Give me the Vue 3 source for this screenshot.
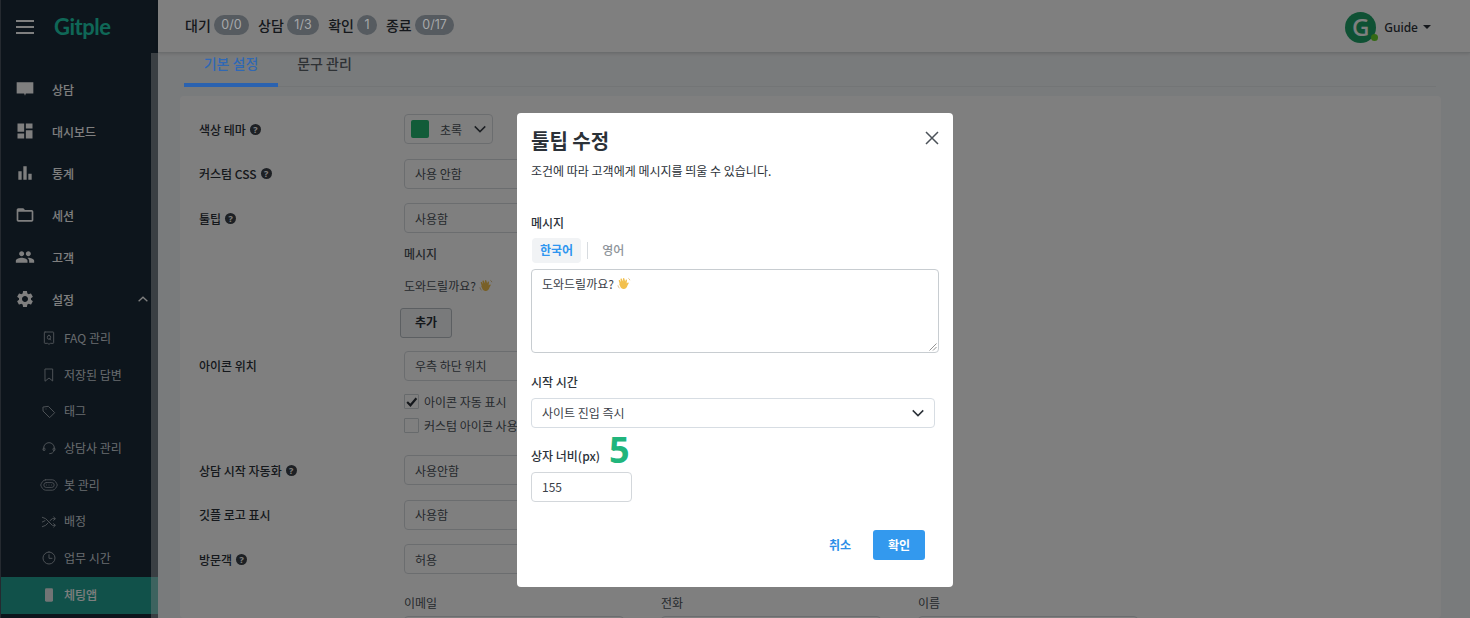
<script setup>
const mainNav = [
  { label: '상담', d: 'M2 4h20v13.5h-9L12 20l-1-2.5H2z' },
  { label: '대시보드', d: 'M3 13h8V3H3v10zm0 8h8v-6H3v6zm10 0h8V11h-8v10zm0-18v6h8V3h-8z' },
  { label: '통계', d: 'M4 10h4v10H4zM10 4h4v16h-4zM16 13h4v7h-4z' },
  { label: '세션', d: 'M20 6h-8l-2-2H4c-1.1 0-1.99.9-1.99 2L2 18c0 1.1.9 2 2 2h16c1.1 0 2-.9 2-2V8c0-1.1-.9-2-2-2zm0 12H4V8h16v10z' },
  { label: '고객', d: 'M16 11c1.66 0 2.99-1.34 2.99-3S17.66 5 16 5c-1.66 0-3 1.34-3 3s1.34 3 3 3zm-8 0c1.66 0 2.99-1.34 2.99-3S9.66 5 8 5C6.34 5 5 6.34 5 8s1.34 3 3 3zm0 2c-2.33 0-7 1.17-7 3.5V19h14v-2.5c0-2.33-4.67-3.5-7-3.5zm8 0c-.29 0-.62.02-.97.05 1.16.84 1.97 1.97 1.97 3.45V19h6v-2.5c0-2.33-4.67-3.5-7-3.5z' },
  { label: '설정', open: true, d: 'M19.14 12.94c.04-.3.06-.61.06-.94 0-.32-.02-.64-.07-.94l2.03-1.58c.18-.14.23-.41.12-.61l-1.92-3.32c-.12-.22-.37-.29-.59-.22l-2.39.96c-.5-.38-1.03-.7-1.62-.94l-.36-2.54c-.04-.24-.24-.41-.48-.41h-3.84c-.24 0-.43.17-.47.41l-.36 2.54c-.59.24-1.13.57-1.62.94l-2.39-.96c-.22-.08-.47 0-.59.22L2.74 8.87c-.12.21-.08.47.12.61l2.03 1.58c-.05.3-.09.63-.09.94s.02.64.07.94l-2.03 1.58c-.18.14-.23.41-.12.61l1.92 3.32c.12.22.37.29.59.22l2.39-.96c.5.38 1.03.7 1.62.94l.36 2.54c.05.24.24.41.48.41h3.84c.24 0 .44-.17.47-.41l.36-2.54c.59-.24 1.13-.56 1.62-.94l2.39.96c.22.08.47 0 .59-.22l1.92-3.32c.12-.22.07-.47-.12-.61l-2.01-1.58zM12 15.6c-1.98 0-3.6-1.62-3.6-3.6s1.62-3.6 3.6-3.6 3.6 1.62 3.6 3.6-1.62 3.6-3.6 3.6z' }
]

const subNav = [
  { label: 'FAQ 관리', d: 'M6 3h12a1 1 0 0 1 1 1v15a1 1 0 0 1-1 1h-4l-2 1.5L10 20H6a1 1 0 0 1-1-1V4a1 1 0 0 1 1-1zM12 8a2.5 3 0 1 0 0 6 2.500 3 0 0 0 0-6zM13 13l1.500 2' },
  { label: '저장된 답변', d: 'M6.500 3h11v18L12 16.500 6.500 21z' },
  { label: '태그', d: 'M3.500 4.500 11 3.500l9.500 9.500-7.500 7.500L3.500 11zM7.500 7.500h.01' },
  { label: '상담사 관리', d: 'M4 14v-2a8 8 0 0 1 16 0v2M3 14.500a1.500 1.500 0 0 0 3 0v-1a1.500 1.500 0 0 0-3 0zM18 14.500a1.500 1.500 0 0 0 3 0v-1a1.500 1.500 0 0 0-3 0zM19.500 16c-.5 3-3.500 4.500-6.500 4.500' },
  { label: '봇 관리', wide: true, d: 'M7 4.500h10c3.500 0 6 4.500 7 7.500-1 3-3.500 7.500-7 7.500H7c-3.500 0-6-4.500-7-7.500 1-3 3.500-7.500 7-7.500zM8 8.500h8a3.500 3.500 0 0 1 0 7H8a3.500 3.500 0 0 1 0-7zM8.500 12h.01M12 12h.01M15.500 12h.01' },
  { label: '배정', d: 'M2 5l5 2 10 10h4M2 12l4-2M2 19l5-2 3.500-3.500M13.500 10 17 7h4M19 4.500 21.500 7 19 9.500M19 14.500l2.500 2.500-2.500 2.500' },
  { label: '업무 시간', d: 'M12 3a9 9 0 1 0 0 18 9 9 0 0 0 0-18zM12 7v5.500h4.500' },
  { label: '체팅앱', active: true, solid: true, d: 'M8 2h8a2 2 0 0 1 2 2v16a2 2 0 0 1-2 2H8a2 2 0 0 1-2-2V4a2 2 0 0 1 2-2z' }
]

const counters = [
  { label: '대기', value: '0/0' },
  { label: '상담', value: '1/3' },
  { label: '확인', value: '1' },
  { label: '종료', value: '0/17' }
]

const chevron = 'M2 5l6 6 6-6'
</script>

<template>
  <div class="app">
    <aside class="sidebar">
      <div class="brand">
        <svg class="menu-icon" viewBox="0 0 18 14"><path d="M0 0h18v2H0zM0 6h18v2H0zM0 12h18v2H0z" /></svg>
        <span class="logo">Gitple</span>
      </div>
      <div class="nav-wrap">
        <nav class="nav">
          <a v-for="item in mainNav" :key="item.label" class="nav-item">
            <svg class="nav-icon" viewBox="0 0 24 24"><path :d="item.d" /></svg>
            <span>{{ item.label }}</span>
            <svg v-if="item.open" class="nav-caret" viewBox="0 0 16 16"><path d="M3 10.500 8 6l5 4.500" /></svg>
          </a>
          <a
            v-for="item in subNav"
            :key="item.label"
            class="sub-item"
            :class="{ active: item.active }"
          >
            <span class="sub-icon-box">
              <svg
                class="sub-icon"
                :class="{ solid: item.solid, wide: item.wide }"
                :viewBox="item.wide ? '-1 0 26 24' : '0 0 24 24'"
              ><path :d="item.d" /></svg>
            </span>
            <span>{{ item.label }}</span>
          </a>
        </nav>
        <div class="scrollbar"></div>
      </div>
    </aside>

    <div class="content">
      <header class="topbar">
        <div class="counters">
          <div v-for="c in counters" :key="c.label" class="counter">
            <span>{{ c.label }}</span>
            <span class="badge">{{ c.value }}</span>
          </div>
        </div>
        <div class="user">
          <div class="avatar">
            <span>G</span>
            <i class="avatar-dot"></i>
          </div>
          <span class="user-name">Guide</span>
          <i class="user-caret"></i>
        </div>
      </header>

      <div class="tabs">
        <a class="tab active">기본 설정</a>
        <a class="tab">문구 관리</a>
      </div>

      <section class="card">
        <div class="row">
          <label class="row-label">색상 테마 <i class="help">?</i></label>
          <div class="theme-select">
            <i class="swatch"></i>
            <span class="theme-name">초록</span>
            <svg class="chev" viewBox="0 0 16 16"><path :d="chevron" /></svg>
          </div>
        </div>
        <div class="row">
          <label class="row-label">커스텀 CSS <i class="help">?</i></label>
          <div class="control">사용 안함</div>
        </div>
        <div class="row">
          <label class="row-label">툴팁 <i class="help">?</i></label>
          <div class="control">사용함</div>
        </div>
        <div class="tooltip-list">
          <div class="small-head">메시지</div>
          <div class="tooltip-text">도와드릴까요? <svg class="wave" viewBox="0 0 16 16"><use href="#wave-hand" /></svg></div>
          <button class="add-btn" type="button">추가</button>
        </div>
        <div class="row">
          <label class="row-label">아이콘 위치</label>
          <div class="control">우측 하단 위치</div>
        </div>
        <div class="checks">
          <label class="check"><i class="box"><svg viewBox="0 0 12 12"><path d="M2 6.500 5 9.500 10.500 3" /></svg></i>아이콘 자동 표시</label>
          <label class="check"><i class="box"></i>커스텀 아이콘 사용</label>
        </div>
        <div class="row">
          <label class="row-label">상담 시작 자동화 <i class="help">?</i></label>
          <div class="control">사용안함</div>
        </div>
        <div class="row">
          <label class="row-label">깃플 로고 표시</label>
          <div class="control">사용함</div>
        </div>
        <div class="row">
          <label class="row-label">방문객 <i class="help">?</i></label>
          <div class="control">허용</div>
        </div>
        <div class="fields">
          <div class="field">이메일<div class="field-input"></div></div>
          <div class="field">전화<div class="field-input"></div></div>
          <div class="field">이름<div class="field-input"></div></div>
        </div>
      </section>
    </div>

    <div class="overlay">
      <div class="modal">
        <div class="modal-head">
          <h2>툴팁 수정</h2>
          <svg class="close" viewBox="0 0 14 14"><path d="M1 1l12 12M13 1 1 13" /></svg>
        </div>
        <p class="modal-desc">조건에 따라 고객에게 메시지를 띄울 수 있습니다.</p>

        <div class="modal-label msg-label">메시지</div>
        <div class="lang-tabs">
          <span class="lang active">한국어</span>
          <i class="lang-sep"></i>
          <span class="lang">영어</span>
        </div>
        <div class="textarea">
          도와드릴까요? <svg class="wave" viewBox="0 0 16 16"><use href="#wave-hand" /></svg>
          <svg class="grip" viewBox="0 0 8 8"><path d="M7.500 .5l-7 7M7.500 4l-3.500 3.500" /></svg>
        </div>

        <div class="modal-label time-label">시작 시간</div>
        <div class="modal-select">
          <span>사이트 진입 즉시</span>
          <svg class="chev dark" viewBox="0 0 16 16"><path :d="chevron" /></svg>
        </div>

        <div class="modal-label width-label">
          상자 너비(px)
          <span class="step-mark">5</span>
        </div>
        <div class="width-input">155</div>

        <div class="modal-actions">
          <button class="btn-text" type="button">취소</button>
          <button class="btn-primary" type="button">확인</button>
        </div>
      </div>
    </div>

    <svg class="defs" width="0" height="0">
      <symbol id="wave-hand" viewBox="0 0 16 16">
        <path fill="#f2c04e" d="M3 7.500 2 4.500c-.3-1 1-1.500 1.500-.5l1.200 2L4 2.800c-.2-1 1.200-1.400 1.600-.4l1.400 3L6.800 2c0-1 1.400-1.200 1.600-.2L9.300 5l.6-1.600c.4-1 1.700-.6 1.500.4l-.4 3.700c.6-.8 1.700-1.600 2.300-.9.5.6-.9 2-1.300 3.200-.8 2.500-2.400 4.400-4.800 4-2.600-.4-3.600-3-4.700-5.900z" />
        <path fill="none" stroke="#c98f2b" stroke-width=".6" d="M1 9.500c.2 1.400 1 2.600 2 3.500M13 1.500c.9.500 1.500 1.200 1.700 2.200" />
      </symbol>
    </svg>
  </div>
</template>

<style>
html,
body {
  margin: 0;
  background: #f3f6f8;
}
</style>

<style scoped>
.app {
  position: relative;
  display: flex;
  width: 1470px;
  height: 618px;
  overflow: hidden;
  background: #f3f6f8;
  font-family: "Noto Sans CJK KR", "Noto Sans", sans-serif;
  color: #2b3138;
}

.defs {
  position: absolute;
}

.sidebar {
  flex: 0 0 158px;
  box-sizing: border-box;
  display: flex;
  flex-direction: column;
  background: #1a2a38;
  border-left: 1px solid #4a5560;
  color: #fff;
}

.brand {
  flex: 0 0 53px;
  display: flex;
  align-items: center;
  padding-left: 15px;
}

.menu-icon {
  width: 18px;
  height: 14px;
  fill: #fff;
}

.logo {
  margin-left: 20px;
  font-family: Lato, "Noto Sans", sans-serif;
  font-size: 22px;
  font-weight: 700;
  letter-spacing: -0.5px;
  color: #1fcfae;
}

.nav-wrap {
  position: relative;
  flex: 1;
  min-height: 0;
}

.nav {
  padding-top: 15px;
}

.scrollbar {
  position: absolute;
  top: 0;
  right: 0;
  bottom: 0;
  width: 7px;
  background: rgba(255, 255, 255, 0.4);
}

.nav-item {
  display: flex;
  align-items: center;
  height: 42px;
  padding-left: 14px;
  font-size: 12px;
  font-weight: 500;
}

.nav-icon {
  width: 20px;
  height: 20px;
  margin-right: 17px;
  fill: #fff;
}

.nav-caret {
  width: 14px;
  height: 14px;
  margin-left: auto;
  margin-right: 8px;
  fill: none;
  stroke: #fff;
  stroke-width: 1.500;
}

.sub-item {
  display: flex;
  align-items: center;
  height: 36.700px;
  padding-left: 39px;
  font-size: 12px;
  color: #cfd6dc;
}

.sub-item > span:last-child {
  margin-top: -2px;
}

.sub-icon-box {
  flex: 0 0 18px;
  display: flex;
  justify-content: center;
  margin-right: 6px;
}

.sub-icon {
  width: 16px;
  height: 16px;
  fill: none;
  stroke: #98a2ab;
  stroke-width: 1.500;
  stroke-linecap: round;
}

.sub-icon.wide {
  width: 18px;
  height: 18px;
  flex: none;
  stroke-width: 1.300;
}

.sub-icon.solid {
  fill: #e4e8ea;
  stroke: none;
}

.sub-item.active {
  color: #fff;
  font-weight: 500;
  background: #22a294;
}

.content {
  flex: 1;
  min-width: 0;
  display: flex;
  flex-direction: column;
}

.topbar {
  flex: 0 0 53px;
  box-sizing: border-box;
  display: flex;
  align-items: center;
  justify-content: space-between;
  padding: 0 39px 3px 27px;
  background: #fff;
  border-bottom: 1px solid #d6dadd;
  box-shadow: 0 1px 3px rgba(0, 0, 0, 0.12);
}

.counters {
  display: flex;
  gap: 9px;
  font-size: 14px;
  font-weight: 500;
}

.counter {
  display: flex;
  align-items: center;
  gap: 3px;
  white-space: nowrap;
}

/* sits above the dim layer: its text stays brighter than 50% black allows */
.badge {
  position: relative;
  z-index: 6;
  height: 20px;
  line-height: 20px;
  padding: 0 7.500px;
  border-radius: 10px;
  background: #565b60;
  color: #a6a8aa;
  font-family: Inter, "Noto Sans", sans-serif;
  font-size: 12.500px;
  font-weight: 400;
}

.user {
  display: flex;
  align-items: center;
  margin-top: 5px;
  font-size: 12px;
  font-weight: 500;
}

.avatar {
  position: relative;
  width: 31px;
  height: 31px;
  border-radius: 50%;
  background: #1ea368;
  color: #fff;
  display: flex;
  align-items: center;
  justify-content: center;
  font-family: "Noto Sans", sans-serif;
  font-size: 24px;
  font-weight: 500;
  line-height: 1;
}

.avatar-dot {
  position: absolute;
  right: -2px;
  bottom: 2px;
  width: 7px;
  height: 7px;
  border-radius: 50%;
  background: #6ad42a;
}

.user-name {
  margin-left: 8px;
  font-family: "Noto Sans", sans-serif;
}

.user-caret {
  margin-left: 5px;
  border: 4px solid transparent;
  border-top-color: #2b3138;
  border-bottom: 0;
}

.tabs {
  flex: 0 0 34px;
  display: flex;
  align-items: stretch;
  margin: 0 34px 0 26px;
  border-bottom: 1px solid #e6eaed;
  box-sizing: border-box;
}

.tab {
  width: 94px;
  box-sizing: border-box;
  text-align: center;
  font-size: 14px;
  font-weight: 500;
  line-height: 21px;
  color: #5d646b;
}

.tab.active {
  position: relative;
  z-index: 6;
  color: #3068b4;
  border-bottom: 4px solid #2a62b0;
  margin-bottom: -1px;
}

.tab + .tab {
  width: 93px;
}

.card {
  flex: 1;
  min-height: 0;
  margin: 9px 29px 0 22px;
  padding: 18px 19px 0;
  border-radius: 4px;
  background: #fff;
  overflow: hidden;
}

.row {
  display: flex;
  align-items: center;
  height: 30px;
  margin-bottom: 14.500px;
}

.row-label {
  flex: 0 0 205px;
  font-size: 12px;
  font-weight: 500;
  display: flex;
  align-items: center;
  gap: 4px;
}

.help {
  width: 11px;
  height: 11px;
  border-radius: 50%;
  background: #3b4148;
  color: #fff;
  font-family: "Noto Sans", sans-serif;
  font-size: 9px;
  font-style: normal;
  font-weight: 700;
  line-height: 11px;
  text-align: center;
}

.control,
.theme-select {
  box-sizing: border-box;
  height: 30px;
  display: flex;
  align-items: center;
  border: 1px solid #d7dbdf;
  border-radius: 4px;
  font-size: 12px;
  background: #fff;
  color: #4b5259;
}

.control {
  width: 220px;
  padding-left: 10px;
}

.theme-select {
  width: 89px;
  padding: 0 9px 0 6px;
  gap: 11px;
}

.swatch {
  width: 18px;
  height: 18px;
  flex: none;
  border-radius: 2px;
  background: #22b873;
}

.theme-name {
  flex: none;
  white-space: nowrap;
}

.chev {
  width: 14px;
  height: 14px;
  flex: none;
  margin-left: auto;
  fill: none;
  stroke: #3b4148;
  stroke-width: 1.700;
}

.tooltip-list {
  margin: -3px 0 13px 205px;
  font-size: 12px;
  color: #4b5259;
}

.small-head {
  line-height: 18px;
  font-weight: 500;
}

.tooltip-text {
  margin-top: 14px;
  line-height: 18px;
  display: flex;
  align-items: center;
  gap: 3px;
}

.wave {
  width: 14px;
  height: 14px;
  flex: none;
  vertical-align: -2px;
}

.add-btn {
  display: block;
  margin: 13px 0 0 -4px;
  width: 52px;
  height: 30px;
  padding: 0 0 2px;
  border: 1px solid #b9bfc5;
  border-radius: 3px;
  background: #f3f5f7;
  font: 700 12px "Noto Sans CJK KR", "Noto Sans", sans-serif;
  color: #2b3138;
}

.checks {
  margin: -6px 0 18px 205px;
  font-size: 12px;
  color: #4b5259;
}

.check {
  display: flex;
  align-items: center;
  gap: 5px;
  height: 24px;
}

.box {
  width: 13px;
  height: 13px;
  border: 1px solid #cfd4d8;
  background: #fff;
  border-radius: 1px;
}

.box svg {
  display: block;
  width: 13px;
  height: 13px;
  fill: none;
  stroke: #2b3138;
  stroke-width: 2;
}

.fields {
  display: flex;
  gap: 37px;
  margin: 20px 0 0 205px;
  font-size: 12px;
  color: #4b5259;
}

.field {
  width: 220px;
  line-height: 18px;
}

.field-input {
  margin-top: 4px;
  height: 30px;
  border: 1px solid #d7dbdf;
  border-radius: 4px;
}

.overlay {
  position: absolute;
  inset: 0;
  z-index: 5;
  display: flex;
  justify-content: center;
  align-items: flex-start;
  padding-top: 113px;
  background: rgba(0, 0, 0, 0.5);
}

.modal {
  box-sizing: border-box;
  width: 436px;
  height: 474px;
  padding: 14px 14px 0;
  background: #fff;
  border-radius: 4px;
}

.modal-head {
  display: flex;
  align-items: center;
  justify-content: space-between;
  height: 28px;
}

.modal-head h2 {
  margin: 0;
  font-size: 20px;
  font-weight: 700;
  line-height: 28px;
  color: #2b3138;
}

.close {
  width: 14px;
  height: 14px;
  margin: -6px 0 0;
  fill: none;
  stroke: #4b5259;
  stroke-width: 1.500;
}

.modal-desc {
  margin: 6px 0 0;
  font-size: 12px;
  line-height: 20px;
  color: #2b3138;
}

.modal-label {
  font-size: 12px;
  font-weight: 500;
  line-height: 18px;
  color: #2b3138;
}

.msg-label {
  margin-top: 33px;
}

.lang-tabs {
  display: flex;
  align-items: center;
  margin: 6px 0 6px 1px;
  height: 25px;
  font-size: 12px;
}

.lang {
  box-sizing: border-box;
  height: 25px;
  padding: 0 8px;
  line-height: 23px;
  color: #8f959b;
  font-weight: 500;
}

.lang.active {
  background: #f1f3f5;
  border-radius: 4px;
  color: #2f96f0;
  font-weight: 700;
}

.lang-sep {
  width: 1px;
  height: 17px;
  margin: 0 6px;
  background: #d7dbdf;
}

.textarea {
  position: relative;
  box-sizing: border-box;
  width: 408px;
  height: 84px;
  padding: 5px 10px;
  border: 1px solid #c8cdd1;
  border-radius: 4px;
  font-size: 12px;
  line-height: 18px;
  color: #3b4148;
}

.grip {
  position: absolute;
  right: 1px;
  bottom: 1px;
  width: 8px;
  height: 8px;
  fill: none;
  stroke: #777;
  stroke-width: 0.800;
}

.time-label {
  margin-top: 20px;
}

.modal-select {
  box-sizing: border-box;
  display: flex;
  align-items: center;
  width: 404px;
  height: 30px;
  margin-top: 7px;
  padding: 0 9px 0 10px;
  border: 1px solid #d7dde3;
  border-radius: 4px;
  font-size: 12px;
  color: #3b4148;
}

.modal-select > span {
  margin-top: -2px;
}

.chev.dark {
  stroke: #2b3138;
}

.width-label {
  position: relative;
  margin-top: 19px;
}

.step-mark {
  position: absolute;
  left: 78px;
  top: -17px;
  font-family: "Noto Sans", sans-serif;
  font-size: 36px;
  font-weight: 700;
  line-height: 40px;
  color: #21b57c;
}

.width-input {
  box-sizing: border-box;
  width: 101px;
  height: 30px;
  margin-top: 7px;
  padding-left: 10px;
  border: 1px solid #d3d7db;
  border-radius: 4px;
  font-size: 12px;
  line-height: 28px;
  color: #3b4148;
}

.modal-actions {
  display: flex;
  justify-content: flex-end;
  align-items: center;
  gap: 22px;
  margin: 28px 14px 0 0;
}

.btn-text,
.btn-primary {
  border: 0;
  padding: 0 0 2px;
  font: 700 12px "Noto Sans CJK KR", "Noto Sans", sans-serif;
}

.btn-text {
  background: none;
  color: #2b8ee8;
}

.btn-primary {
  width: 52px;
  height: 30px;
  border-radius: 3px;
  background: #3399ee;
  color: #fff;
}
</style>
